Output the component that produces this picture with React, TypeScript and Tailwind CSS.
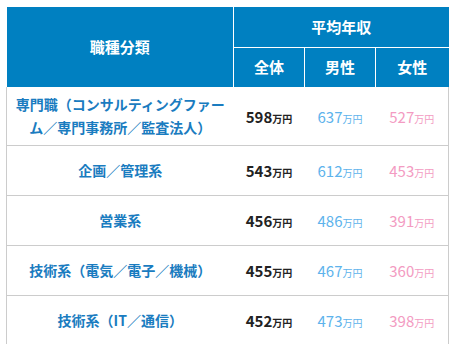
const rows = [
  { label: ["専門職（コンサルティングファー", "ム／専門事務所／監査法人）"], all: 598, male: 637, female: 527 },
  { label: ["企画／管理系"], all: 543, male: 612, female: 453 },
  { label: ["営業系"], all: 456, male: 486, female: 391 },
  { label: ["技術系（電気／電子／機械）"], all: 455, male: 467, female: 360 },
  { label: ["技術系（IT／通信）"], all: 452, male: 473, female: 398 },
];

function Yen({ value, className }: { value: number; className: string }) {
  return (
    <span className={className}>
      <span className="text-[15px]">{value}</span>
      <span className="text-[10px]">万円</span>
    </span>
  );
}

export default function App() {
  return (
    <div
      className="min-h-screen bg-white pt-[7px] pl-[6px]"
      style={{ fontFamily: '"Noto Sans CJK JP", "Noto Sans", sans-serif' }}
    >
      <table className="w-[442px] table-fixed border-collapse">
        <colgroup>
          <col className="w-[227px]" />
          <col className="w-[71px]" />
          <col className="w-[71px]" />
          <col className="w-[73px]" />
        </colgroup>
        <thead>
          <tr className="h-[40px]">
            <th
              rowSpan={2}
              className="border-r border-white bg-[#0080c1] text-[15px] font-bold text-white"
            >
              職種分類
            </th>
            <th colSpan={3} className="border-b border-white bg-[#0080c1] text-[15px] font-bold text-white">
              平均年収
            </th>
          </tr>
          <tr className="h-[40px]">
            <th className="border-r border-white bg-[#0080c1] text-[15px] font-bold text-white">全体</th>
            <th className="border-r border-white bg-[#0080c1] text-[15px] font-bold text-white">男性</th>
            <th className="bg-[#0080c1] text-[15px] font-bold text-white">女性</th>
          </tr>
        </thead>
        <tbody>
          {rows.map((r, i) => (
            <tr
              key={i}
              className={`border-x border-b border-[#cccccc] ${i === 0 ? "h-[58px]" : "h-[50px]"}`}
            >
              <td className="px-[4px] text-center text-[14px] leading-[23px] font-bold text-[#1a7cc0]">
                {r.label.map((l, j) => (
                  <div key={j}>{l}</div>
                ))}
              </td>
              <td className="text-center">
                <Yen value={r.all} className="font-bold text-[#222222]" />
              </td>
              <td className="text-center">
                <Yen value={r.male} className="text-[#5db3ec]" />
              </td>
              <td className="text-center">
                <Yen value={r.female} className="text-[#f39bc2]" />
              </td>
            </tr>
          ))}
        </tbody>
      </table>
    </div>
  );
}
